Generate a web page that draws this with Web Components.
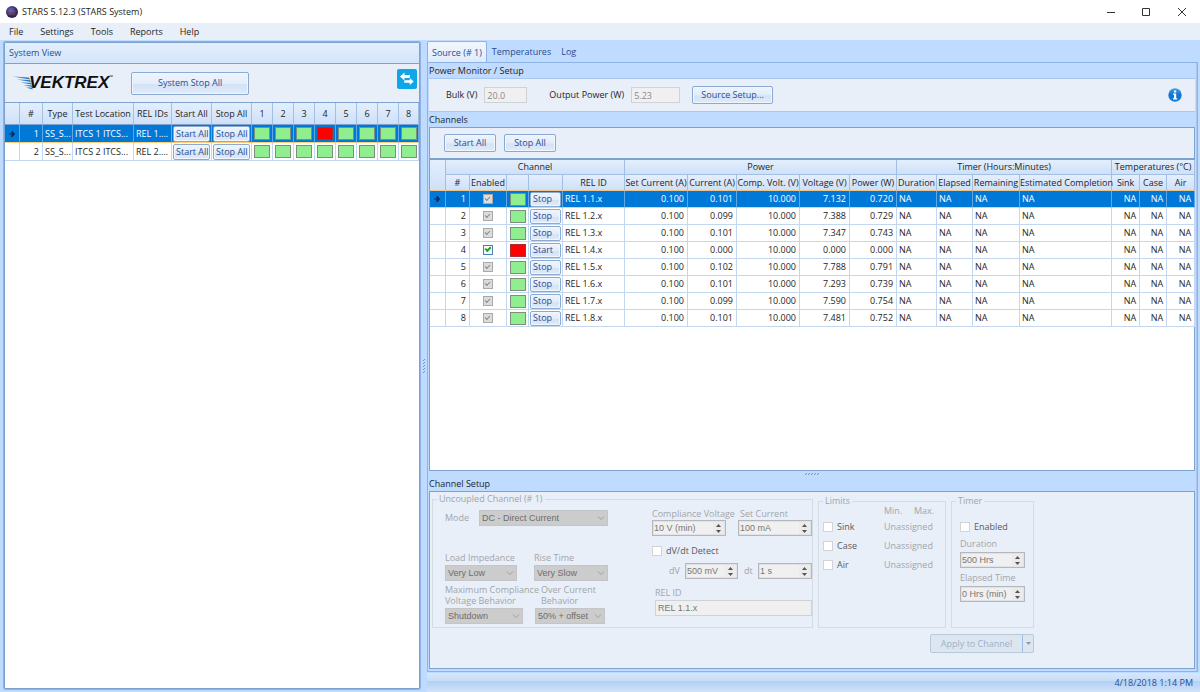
<!DOCTYPE html>
<html lang="en">
<head>
<meta charset="utf-8">
<title>STARS 5.12.3 (STARS System)</title>
<style>
  html, body { margin: 0; min-height: 100%; }
  body {
    --line: #7da2ce; --edge: #8db2e3; --ink: #1e1e1e; --link: #2a4c91; --face: #e8eff9; --back: #bfdbff;
    --muted: #a3a5a8;
    font: 9px/12px "Open Sans", "Noto Sans", sans-serif; color: var(--ink); background: var(--back);
  }
</style>
</head>
<body>
<stars-window></stars-window>

<script>
const define = (name, html, setup) => {
  const template = document.createElement('template');
  template.innerHTML = html;
  customElements.define(name, class extends HTMLElement {
    constructor() {
      super();
      this.attachShadow({ mode: 'open' }).append(template.content.cloneNode(true));
    }
    connectedCallback() {
      if (this.ready) return;
      this.ready = true;
      if (setup) setup(this, this.shadowRoot);
    }
  });
};

/* ---------- controls ---------- */

define('push-button', `
<style>
  :host { display: block; }
  button {
    display: block; box-sizing: border-box; width: 100%; height: 100%; margin: 0; padding: 0 2px; font: inherit;
    color: var(--link); border: 1px solid #8aa9d3; border-radius: 2px; white-space: nowrap; text-align: var(--align, center);
    background: linear-gradient(#edf4fd 0%, #e3edfa 50%, #d3e2f5 55%, #e0ebfa 100%);
    box-shadow: inset 0 0 0 1px #f0f6fe;
  }
</style>
<button type="button"><slot></slot></button>`);

define('spin-box', `
<style>
  :host { display: block; height: 16px; }
  div {
    display: flex; box-sizing: border-box; height: 100%; border: 1px solid #b4b7bb; background: #f0f0f0;
    box-shadow: inset 0 0 0 1px #dfe2e6;
  }
  input {
    flex: 1; min-width: 0; border: 0; padding: 0 0 0 1px; margin: 0; background: none;
    font: 9px/12px "Liberation Sans", Arial, sans-serif; color: #777;
  }
  span { display: grid; grid-template-rows: 1fr 1fr; width: 13px; padding: 1px; box-sizing: border-box; }
  button { border: 0; padding: 0; margin: 0; background: #ebebeb; display: grid; place-items: center; }
  svg { display: block; }
</style>
<div><input type="text" disabled><span>
<button type="button" disabled aria-label="Increase"><svg width="5" height="3"><path d="M0 3 2.5 0 5 3z" fill="#555"/></svg></button>
<button type="button" disabled aria-label="Decrease"><svg width="5" height="3"><path d="M0 0 2.5 3 5 0z" fill="#555"/></svg></button>
</span></div>`, (el, root) => {
  const input = root.querySelector('input');
  input.value = el.getAttribute('value');
  input.setAttribute('aria-label', el.getAttribute('label'));
});

define('drop-down', `
<style>
  :host { display: block; height: 16px; position: relative; }
  select {
    appearance: none; box-sizing: border-box; width: 100%; height: 100%; margin: 0; padding: 0 14px 0 2px;
    border: 1px solid #c3c5c8; border-radius: 0; background: #cccccc; opacity: 1;
    font: 9px/12px "Liberation Sans", Arial, sans-serif; color: #6d6d6d;
  }
  svg { position: absolute; right: 3px; top: 6px; }
</style>
<select disabled><option></option></select>
<svg width="8" height="5" fill="none" stroke="#a0a0a0"><path d="M1 .5 4 3.5 7 .5"/></svg>`, (el, root) => {
  root.querySelector('option').textContent = el.getAttribute('value');
  root.querySelector('select').setAttribute('aria-label', el.getAttribute('label'));
});

define('tick-box', `
<style>
  :host { display: block; }
  label { display: flex; align-items: center; gap: 4px; height: 10px; color: #5a5a5a; white-space: nowrap; }
  input {
    appearance: none; box-sizing: border-box; flex: none; width: 10px; height: 10px; margin: 0;
    background: #fff; border: 1px solid #d3d3d3; display: grid; place-items: center;
  }
  input:checked:disabled { background: #dcdcdc; border-color: #a9a9a9; }
  input:checked:enabled { border-color: #4f7fae; background: #f2f8ff; }
  input:checked::before {
    content: ""; width: 4px; height: 2px; border: solid #8a8a8a; border-width: 0 0 1px 1px;
    transform: rotate(-45deg) translate(1px, -1px);
  }
  input:checked:enabled::before { border-color: #21a121; border-width: 0 0 2px 2px; }
</style>
<label><input type="checkbox"><slot></slot></label>`, (el, root) => {
  const input = root.querySelector('input');
  input.checked = el.hasAttribute('checked');
  input.disabled = el.hasAttribute('disabled');
  if (el.hasAttribute('label')) input.setAttribute('aria-label', el.getAttribute('label'));
});

define('group-box', `
<style>
  :host { display: block; }
  fieldset { box-sizing: border-box; height: 100%; min-width: 0; margin: 0; padding: 0; border: 1px solid #d5dbe2; }
  legend { margin-left: 4px; padding: 0 2px; line-height: 10px; color: var(--muted); }
</style>
<fieldset><legend></legend><slot></slot></fieldset>`, (el, root) => {
  root.querySelector('legend').textContent = el.getAttribute('caption');
});

/* ---------- window chrome ---------- */

define('title-bar', `
<style>
  :host { display: flex; align-items: center; height: 23px; background: #fff; padding: 0 6px; gap: 4px; }
  span { flex: 1; }
  svg { display: block; }
  nav { display: flex; gap: 25px; padding-right: 6px; }
  button { border: 0; padding: 0; background: none; }
</style>
<svg width="12" height="12" viewBox="0 0 12 12">
  <defs><radialGradient id="g" cx=".4" cy=".35"><stop offset="0" stop-color="#7467b0"/><stop offset=".6" stop-color="#43407f"/><stop offset="1" stop-color="#2b2450"/></radialGradient></defs>
  <circle cx="6" cy="6" r="6" fill="url(#g)"/>
  <path d="M1 5.500h10M1.500 8h9M3.500 2.500c1 2-1 4 1 7M7.500 2c-1 3 2 4 0 8" stroke="#b0455f" stroke-width=".7" fill="none" opacity=".7"/>
</svg>
<span>STARS 5.12.3 (STARS System)</span>
<nav>
  <button type="button" aria-label="Minimize"><svg width="10" height="10"><path d="M1 5.500h8" stroke="#333"/></svg></button>
  <button type="button" aria-label="Maximize"><svg width="10" height="10"><path d="M1.500 1.500h7v7h-7z" stroke="#333" fill="none"/></svg></button>
  <button type="button" aria-label="Close"><svg width="12" height="10"><path d="M2 1l8 8M10 1l-8 8" stroke="#333"/></svg></button>
</nav>`);

define('menu-bar', `
<style>
  :host { display: flex; align-items: center; gap: 17px; height: 17px; padding: 0 9px; background: var(--face); }
  a { color: var(--ink); text-decoration: none; }
</style>
<a href="#file">File</a><a href="#settings">Settings</a><a href="#tools">Tools</a><a href="#reports">Reports</a><a href="#help">Help</a>`);

define('status-bar', `
<style>
  :host {
    display: flex; align-items: center; justify-content: flex-end; height: 19px; padding-right: 7px; color: var(--link);
    background: linear-gradient(#d6e7fd 0%, #c7ddf8 40%, #b3d0f3 45%, #cfe2fb 100%);
  }
</style>
<time>4/18/2018 1:14 PM</time>`);

define('drag-grip', `
<style>
  :host { display: grid; place-items: center; }
  svg { display: block; }
</style>
<svg></svg>`, (el, root) => {
  const svg = root.querySelector('svg');
  const vertical = el.hasAttribute('vertical');
  svg.setAttribute('width', vertical ? 3 : 15);
  svg.setAttribute('height', vertical ? 15 : 3);
  svg.innerHTML = [0, 3, 6, 9, 12].map(n =>
    `<path d="M${vertical ? 0 : n} ${vertical ? n + 2 : 2}l2-2" stroke="#6d94c9"/>`).join('');
});

/* ---------- data grids ---------- */

const gridStyle = `
  :host { display: block; background: #fff; }
  table { width: 100%; table-layout: fixed; border-collapse: separate; border-spacing: 0; }
  th, td { box-sizing: border-box; padding: 0 3px 0 2px; border: solid #c4d7f0; border-width: 0 1px 1px 0; white-space: nowrap; overflow: hidden; }
  th { padding: 0; font-weight: normal; text-align: center; border-color: #a3bfe4; background: linear-gradient(#e3effe, #cfe0f7); }
  .n { text-align: right; }
  .c { text-align: center; }
  .b { padding: 0 1px; }
  td tick-box { width: 10px; margin: 0 auto; }
  tr.on td { background: #0078d7; color: #fff; border-bottom-color: #ffcf7d; border-right-color: #5fa9e6; }
  tr.on td.b, tr.on td.p { color: var(--link); }
  i { display: block; box-sizing: border-box; width: 16px; height: 13px; margin: 0 auto; border: 1px solid #7b8f7b; background: #90ee90; }
  i.red { background: #f00; border-color: #b03030; }
  svg { display: block; margin: 0 auto; }
`;
const cols = list => '<colgroup>' + list.map(w => `<col style="width:${w}px">`).join('') + '</colgroup>';
const arrow = '<svg width="6" height="6"><path d="M0 3h4M3 0l2.500 3L3 6z" stroke="#0b2a5c" fill="#0b2a5c"/></svg>';
const head = list => list.map(t => `<th scope="col">${t}</th>`).join('');

define('system-grid', `
<style>${gridStyle}
  thead th { height: 22px; border-bottom-color: #7da2ce; }
  td { height: 18px; }
  push-button { height: 16px; }
</style>
<table></table>`, (el, root) => {
  const row = (n, on) => `<tr class="${on ? 'on' : ''}"><td class="p">${on ? arrow : ''}</td><td class="n">${n}</td><td>SS_S...</td>
    <td>ITCS ${n} ITCS...</td><td>REL ${n}....</td><td class="b"><push-button>Start All</push-button></td>
    <td class="b"><push-button>Stop All</push-button></td>${[1, 2, 3, 4, 5, 6, 7, 8].map(k =>
    `<td class="b"><i class="${on && k === 4 ? 'red' : ''}"></i></td>`).join('')}</tr>`;
  root.querySelector('table').innerHTML =
    cols([15, 23, 30, 61, 38, 40, 40, 21, 21, 21, 21, 21, 21, 21, 20]) +
    `<thead><tr>${head(['', '#', 'Type', 'Test Location', 'REL IDs', 'Start All', 'Stop All', 1, 2, 3, 4, 5, 6, 7, 8])}</tr></thead>
    <tbody>${row(1, true)}${row(2, false)}</tbody>`;
});

define('channel-grid', `
<style>${gridStyle}
  thead th { height: 15px; overflow: visible; }
  thead tr + tr th { height: 16px; border-bottom-color: #e9c48c; }
  thead th[rowspan] { border-bottom-color: #e9c48c; }
  td { height: 17px; }
  push-button { height: 15px; --align: left; }
</style>
<table></table>`, (el, root) => {
  const data = [
    ['0.101', '7.132', '0.720'], ['0.099', '7.388', '0.729'], ['0.101', '7.347', '0.743'], ['0.000', '0.000', '0.000'],
    ['0.102', '7.788', '0.791'], ['0.101', '7.293', '0.739'], ['0.099', '7.590', '0.754'], ['0.101', '7.481', '0.752']];
  const rows = data.map(([current, volts, watts], k) => {
    const off = current === '0.000';
    return `<tr class="${k ? '' : 'on'}"><td class="p">${k ? '' : arrow}</td><td class="n">${k + 1}</td>
      <td class="p"><tick-box checked ${off ? '' : 'disabled'} label="Enabled"></tick-box></td>
      <td class="b"><i class="${off ? 'red' : ''}"></i></td><td class="b"><push-button>${off ? 'Start' : 'Stop'}</push-button></td>
      <td>REL 1.${k + 1}.x</td><td class="n">0.100</td><td class="n">${current}</td><td class="n">10.000</td>
      <td class="n">${volts}</td><td class="n">${watts}</td><td>NA</td><td>NA</td><td>NA</td><td>NA</td>
      <td class="n">NA</td><td class="n">NA</td><td class="n">NA</td></tr>`;
  }).join('');
  root.querySelector('table').innerHTML =
    cols([16, 24, 37, 22, 34, 62, 63, 49, 63, 50, 47, 40, 36, 47, 92, 28, 27, 28]) +
    `<thead><tr><th rowspan="2"></th><th colspan="5" scope="colgroup">Channel</th><th colspan="5" scope="colgroup">Power</th>
      <th colspan="4" scope="colgroup">Timer (Hours:Minutes)</th><th colspan="3" scope="colgroup">Temperatures (°C)</th></tr>
    <tr>${head(['#', 'Enabled', '', '', 'REL ID', 'Set Current (A)', 'Current (A)', 'Comp. Volt. (V)', 'Voltage (V)',
      'Power (W)', 'Duration', 'Elapsed', 'Remaining', 'Estimated Completion', 'Sink', 'Case', 'Air'])}</tr></thead>
    <tbody>${rows}</tbody>`;
});

/* ---------- left pane ---------- */

define('vektrex-logo', `
<style>
  :host { display: flex; align-items: center; color: #111; }
  b { font: italic bold 17px/18px "Liberation Sans", Arial, sans-serif; margin-left: -4px; }
  small { align-self: flex-start; font-size: 5px; line-height: 6px; }
  svg { display: block; }
</style>
<svg width="20" height="14" viewBox="0 0 20 14" fill="#2f7fc0">
  <path d="M0 .5 16 1.500 17 3.500z"/><path d="M4 3.500 17 4 18 6z"/><path d="M7.500 6.500 18 6.800 18.500 8.500z"/><path d="M10.500 9 18.500 9.200 19 11z"/><path d="M13 11.500 19.500 11.600 19.500 13.500z"/>
</svg><b>VEKTREX</b><small>™</small>`);

define('system-view', `
<style>
  :host { display: flex; flex-direction: column; box-sizing: border-box; border: 1px solid var(--edge); box-shadow: inset 0 0 0 1px #7da2ce; padding: 1px; border-radius: 2px; background: #fff; }
  h2 { margin: 0; height: 20px; padding-left: 4px; font: inherit; line-height: 20px; color: var(--link); background: linear-gradient(#e4effd, #d3e4fa); border-bottom: 1px solid var(--line); }
  header { display: flex; align-items: center; height: 38px; padding: 0 2px 0 8px; background: var(--face); border-bottom: 1px solid var(--line); }
  header push-button { width: 118px; height: 23px; margin-left: 18px; }
  .swap { margin: 0 0 8px auto; padding: 0; border: 0; border-radius: 2px; width: 20px; height: 20px; background: #0ea5e9; }
  .swap svg { display: block; }
</style>
<h2>System View</h2>
<header>
  <vektrex-logo></vektrex-logo>
  <push-button>System Stop All</push-button>
  <button class="swap" type="button" aria-label="Swap view"><svg width="20" height="20" fill="#fff"><path d="M3 7.500l4.500-4v2.500H13v3H7.500v2.500z"/><path d="M17 12.500l-4.500-4V11H7v3h5.500v2.500z" stroke="#0ea5e9" stroke-width=".5"/></svg></button>
</header>
<system-grid></system-grid>`);

/* ---------- right pane ---------- */

define('tab-strip', `
<style>
  :host { display: flex; height: 21px; margin-top: 1px; }
  a { color: var(--link); text-decoration: none; line-height: 21px; padding: 0 5px; }
  a.on { padding: 0 4px; border: 1px solid var(--edge); border-bottom: 0; border-radius: 2px 2px 0 0; background: linear-gradient(#f1f7ff, #dfebfb); }
</style>
<a class="on" href="#source">Source (# 1)</a><a href="#temperatures">Temperatures</a><a href="#log">Log</a>`);

define('power-monitor', `
<style>
  :host { display: flex; align-items: center; height: 34px; padding: 0 13px 0 17px; background: var(--face); border: solid #a9c7ee; border-width: 1px 0; box-sizing: border-box; }
  input { box-sizing: border-box; height: 16px; margin: 0 0 0 7px; padding: 0 2px; border: 1px solid #cfd2d6; background: #f0f0f0; color: #8a8a8a; font: inherit; }
  #bulk { width: 43px; margin-right: 22px; }
  #out { width: 49px; margin-right: 12px; }
  push-button { width: 81px; height: 18px; }
  svg { margin-left: auto; }
</style>
<label for="bulk">Bulk (V)</label><input id="bulk" value="20.0" disabled>
<label for="out">Output Power (W)</label><input id="out" value="5.23" disabled>
<push-button>Source Setup...</push-button>
<svg width="14" height="14" viewBox="0 0 14 14"><defs><linearGradient id="i" x2="0" y2="1"><stop offset="0" stop-color="#4a9fe4"/><stop offset=".5" stop-color="#1272cf"/><stop offset="1" stop-color="#0a84e8"/></linearGradient></defs>
  <circle cx="7" cy="7" r="6.700" fill="url(#i)"/><path d="M6 2.500h2.200v2H6zM5 5.500h3.200v4.700h1v1.300H5v-1.300h1V6.700H5z" fill="#fff"/></svg>`);

define('channel-setup', `
<style>
  :host { display: block; background: var(--face); color: var(--muted); padding: 2px 3px 0 2px; line-height: 10px; }
  .groups { display: flex; align-items: flex-end; gap: 5px; }
  .one { width: 381px; height: 134px; }
  .two { width: 128px; height: 132px; }
  .three { width: 83px; height: 132px; }
  .pair { display: grid; grid-template-columns: 163px 160px; gap: 44px; padding: 5px 0 0 12px; }
  .mode { display: flex; align-items: center; justify-content: space-between; }
  .mode drop-down { width: 129px; }
  .left { display: grid; grid-template-rows: 18px auto auto; row-gap: 3px; align-content: start; }
  .fields { display: grid; grid-template-columns: 72px 74px; column-gap: 17px; row-gap: 2px; align-items: end; }
  .first { margin-top: 23px; }
  .second { grid-template-columns: 78px 70px; column-gap: 12px; white-space: nowrap; line-height: 11px; }
  .in { padding-left: 6px; }
  .volts { display: grid; grid-template-columns: 74px 74px; column-gap: 12px; row-gap: 1px; white-space: nowrap; }
  .volts span + span { padding-left: 2px; }
  .right tick-box { margin: 10px 0 7px; }
  .dv { display: grid; grid-template-columns: 10px 53px 8px 54px; gap: 6px; justify-content: end; align-items: center; }
  .rel { display: grid; gap: 2px; padding: 9px 0 0 3px; }
  .rel input { box-sizing: border-box; width: 100%; height: 16px; margin: 0; padding: 0 2px; border: 1px solid #cfd2d6; background: #f0f0f0; color: #777; font: 9px/12px "Liberation Sans", Arial, sans-serif; }
  .limits { display: grid; grid-template-columns: 61px 27px 1fr; grid-template-rows: 7px; grid-auto-rows: 10px; row-gap: 9px; padding: 0 0 0 4px; }
  .limits .max { padding-left: 3px; }
  .limits .both { grid-column: 2 / 4; }
  .timer { display: grid; grid-template-columns: 65px; padding: 16px 8px 0; }
  .timer tick-box { margin-bottom: 7px; }
  .timer spin-box { margin: 3px 0 5px; }
  .apply { display: flex; box-sizing: border-box; width: 104px; height: 19px; margin: 6px 0 15px 498px; border: 1px solid #b9c9da; border-radius: 2px; background: #dce6f1; }
  .apply button { border: 0; padding: 0; margin: 0; background: none; color: #9db0c6; font: inherit; flex: 1; }
  .apply button + button { flex: 0 0 11px; border-left: 1px solid #9dbde4; display: grid; place-items: center; }
</style>
<div class="groups">
  <group-box class="one" caption="Uncoupled Channel (# 1)"><div class="pair">
    <div class="left">
      <div class="mode"><span>Mode</span><drop-down label="Mode" value="DC - Direct Current"></drop-down></div>
      <div class="fields first"><span>Load Impedance</span><span>Rise Time</span>
        <drop-down label="Load Impedance" value="Very Low"></drop-down><drop-down label="Rise Time" value="Very Slow"></drop-down></div>
      <div class="fields second"><span>Maximum Compliance<br>Voltage Behavior</span><span class="in">Over Current<br>Behavior</span>
        <drop-down label="Maximum Compliance Voltage Behavior" value="Shutdown"></drop-down><drop-down label="Over Current Behavior" value="50% + offset"></drop-down></div>
    </div>
    <div class="right">
      <div class="volts"><span>Compliance Voltage</span><span>Set Current</span>
        <spin-box label="Compliance Voltage" value="10 V (min)"></spin-box><spin-box label="Set Current" value="100 mA"></spin-box></div>
      <tick-box disabled>dV/dt Detect</tick-box>
      <div class="dv"><span>dV</span><spin-box label="dV" value="500 mV"></spin-box><span>dt</span><spin-box label="dt" value="1 s"></spin-box></div>
      <div class="rel"><label for="rel">REL ID</label><input id="rel" value="REL 1.1.x" disabled></div>
    </div>
  </div></group-box>
  <group-box class="two" caption="Limits"><div class="limits">
    <span></span><span>Min.</span><span class="max">Max.</span>
    <tick-box disabled>Sink</tick-box><span class="both">Unassigned</span>
    <tick-box disabled>Case</tick-box><span class="both">Unassigned</span>
    <tick-box disabled>Air</tick-box><span class="both">Unassigned</span>
  </div></group-box>
  <group-box class="three" caption="Timer"><div class="timer">
    <tick-box disabled>Enabled</tick-box>
    <span>Duration</span><spin-box label="Duration" value="500 Hrs"></spin-box>
    <span>Elapsed Time</span><spin-box label="Elapsed Time" value="0 Hrs (min)"></spin-box>
  </div></group-box>
</div>
<div class="apply"><button type="button" disabled>Apply to Channel</button><button type="button" disabled aria-label="More"><svg width="5" height="3"><path d="M0 0 2.500 3 5 0z" fill="#8a97a6"/></svg></button></div>`);

define('source-panel', `
<style>
  :host { display: flex; flex-direction: column; box-sizing: border-box; border: 1px solid var(--edge); box-shadow: inset -1px 0 #a9c7ee; padding: 0 2px 2px 1px; background: var(--back); }
  h2 { margin: 0; height: 15px; font: inherit; line-height: 15px; }
  .box { border: 1px solid var(--line); }
  .channels { flex: 1; display: flex; flex-direction: column; background: #fff; }
  .bar { display: flex; align-items: center; gap: 8px; height: 30px; padding-left: 14px; background: var(--face); border-bottom: 2px solid var(--line); }
  .bar push-button { width: 52px; height: 18px; }
  drag-grip { height: 5px; align-items: end; }
</style>
<h2>Power Monitor / Setup</h2>
<power-monitor></power-monitor>
<h2>Channels</h2>
<div class="box channels">
  <div class="bar"><push-button>Start All</push-button><push-button>Stop All</push-button></div>
  <channel-grid></channel-grid>
</div>
<drag-grip></drag-grip>
<h2>Channel Setup</h2>
<channel-setup class="box"></channel-setup>`);

define('stars-window', `
<style>
  :host { display: flex; flex-direction: column; min-height: 100vh; }
  main { flex: 1; display: grid; grid-template-columns: 417fr 6px 774fr; padding-left: 3px; }
  system-view { margin: 1px 0 2px; }
  .right { display: flex; flex-direction: column; min-width: 0; }
  source-panel { flex: 1; margin: 0 2px 1px 0; }
</style>
<title-bar></title-bar>
<menu-bar></menu-bar>
<main>
  <system-view></system-view>
  <drag-grip vertical></drag-grip>
  <div class="right"><tab-strip></tab-strip><source-panel></source-panel><status-bar></status-bar></div>
</main>`);
</script>
</body>
</html>
